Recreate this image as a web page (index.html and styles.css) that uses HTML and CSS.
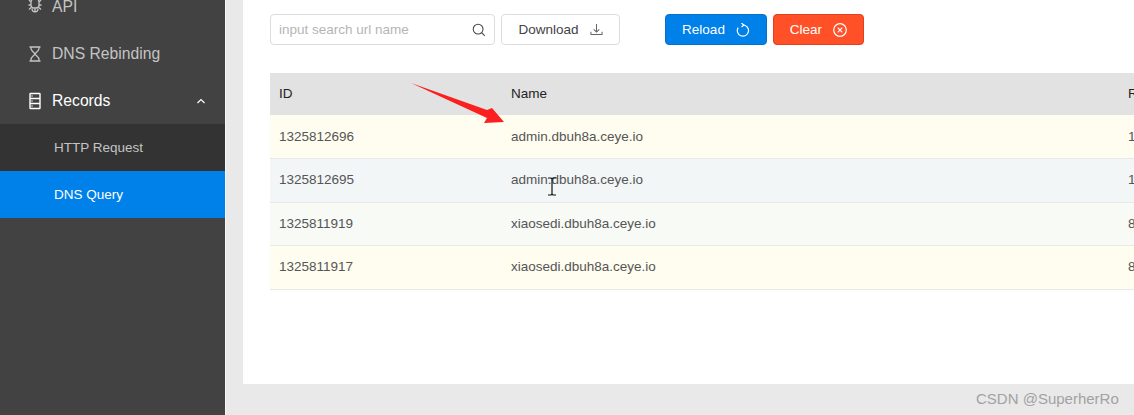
FILE: index.html
```html
<!DOCTYPE html>
<html lang="en">
<head>
    <meta charset="UTF-8">
    <title>DNS Query</title>
    <link rel="stylesheet" href="styles.css">
</head>
<body>
    <aside class="sidebar">
        <a class="menu-item">
            <svg class="menu-icon" viewBox="0 0 14 20" fill="none" stroke="currentColor" stroke-width="1.3">
                <rect x="3" y="2" width="8" height="9" rx="3"/>
                <path d="M3 8H0.5M11 8h2.5M3 10.5l-2 2M11 10.5l2 2M3 5L1 3M11 5l2-2"/>
                <path d="M4 11.5c0 4.5 6 4.5 6 0M7 11.5v3"/>
            </svg>
            <span>API</span>
        </a>
        <a class="menu-item">
            <svg class="menu-icon" viewBox="0 0 14 20" fill="none" stroke="currentColor" stroke-width="1.3">
                <path d="M1.5 3h11M1.5 17h11"/>
                <path d="M3 3v1.5c0 2.5 3 3.5 4 5.5 1-2 4-3 4-5.5V3M3 17v-1.5c0-2.5 3-3.5 4-5.5 1 2 4 3 4 5.500V17"/>
            </svg>
            <span>DNS Rebinding</span>
        </a>
        <a class="menu-item menu-open">
            <svg class="menu-icon" viewBox="0 0 14 20" fill="none" stroke="currentColor" stroke-width="1.4">
                <rect x="2" y="2.5" width="10" height="15" rx="0.5"/>
                <path d="M2 7.5h10M2 12.5h10M3.5 5h1M3.5 10h1M3.5 15h1"/>
            </svg>
            <span>Records</span>
            <svg class="menu-arrow" viewBox="0 0 10 6" fill="none" stroke="currentColor" stroke-width="1.2">
                <path d="M1.5 5L5 1.5 8.5 5"/>
            </svg>
        </a>
        <div class="submenu">
            <a class="submenu-item">HTTP Request</a>
            <a class="submenu-item active">DNS Query</a>
        </div>
    </aside>

    <main class="main">
        <div class="card">
            <div class="toolbar">
                <div class="search">
                    <span class="placeholder">input search url name</span>
                    <svg class="icon search-icon" viewBox="0 0 16 16" fill="none" stroke="currentColor" stroke-width="1.2">
                        <circle cx="7" cy="7" r="5.6"/>
                        <path d="M11 11l3.6 3.6"/>
                    </svg>
                </div>
                <button class="btn btn-default">
                    Download
                    <svg class="icon icon-download" viewBox="0 0 14 14" fill="none" stroke="currentColor" stroke-width="1.1">
                        <path d="M7 1v8.5M4 6.8l3 3 3-3M1 9.5v3h12v-3"/>
                    </svg>
                </button>
                <button class="btn btn-primary">
                    Reload
                    <svg class="icon" viewBox="0 0 14 14" fill="none" stroke="currentColor" stroke-width="1.2">
                        <path d="M7 2A5.6 5.6 0 1 1 2.2 4.6"/>
                        <path d="M5.4 0L7.8 2 5.6 4"/>
                    </svg>
                </button>
                <button class="btn btn-danger">
                    Clear
                    <svg class="icon" viewBox="0 0 14 14" fill="none" stroke="currentColor" stroke-width="1.2">
                        <circle cx="7" cy="7" r="6.3"/>
                        <path d="M4.7 4.7l4.6 4.6M9.3 4.7l-4.6 4.6"/>
                    </svg>
                </button>
            </div>

            <table class="records">
                <colgroup>
                    <col class="col-id">
                    <col class="col-name">
                    <col class="col-addr">
                </colgroup>
                <thead>
                    <tr><th>ID</th><th>Name</th><th>Remote Addr</th></tr>
                </thead>
                <tbody>
                    <tr class="row-yellow"><td>1325812696</td><td>admin.dbuh8a.ceye.io</td><td>172.253.1.3</td></tr>
                    <tr class="row-blue"><td>1325812695</td><td>admin.dbuh8a.ceye.io</td><td>172.253.1.2</td></tr>
                    <tr class="row-green"><td>1325811919</td><td>xiaosedi.dbuh8a.ceye.io</td><td>8.8.8.8</td></tr>
                    <tr class="row-yellow"><td>1325811917</td><td>xiaosedi.dbuh8a.ceye.io</td><td>8.8.4.4</td></tr>
                </tbody>
            </table>
        </div>
    </main>

    <!-- annotation drawn on top of the screenshot -->
    <svg class="annotation" viewBox="0 0 1134 415">
        <polygon points="411,83 487,110 492,108 504,122 484,123 487,118" fill="#fb1f1f"/>
        <path d="M548 178h3l1 1 1-1h3M552 179v15M548 195h3l1-1 1 1h3" fill="none" stroke="#111" stroke-width="1.2"/>
    </svg>
    <div class="watermark">CSDN @SuperherRo</div>
</body>
</html>
```

FILE: styles.css
```css
html, body {
    height: 100%;
}
body {
    display: flex;
    margin: 0;
    overflow: hidden;
    font-family: "Liberation Sans", Arial, sans-serif;
    background-color: #e9e9e9;
}
.sidebar {
    flex: 0 0 225px;
    background-color: #424242;
    overflow: hidden;
}
.menu-item {
    display: flex;
    align-items: center;
    height: 47px;
    padding: 0 19px 0 28px;
    color: #c4c4c4;
    font-size: 15.7px;
    box-sizing: border-box;
}
.menu-item:first-child {
    margin-top: -17px;
}
.menu-icon {
    width: 14px;
    height: 20px;
    margin-right: 10px;
}
.menu-open {
    color: #fff;
}
.menu-arrow {
    width: 10px;
    height: 6px;
    margin-left: auto;
}
.submenu {
    background-color: #333;
}
.submenu-item {
    display: flex;
    align-items: center;
    height: 47px;
    padding-left: 54px;
    padding-bottom: 1px;
    color: #c4c4c4;
    font-size: 13.5px;
    box-sizing: border-box;
}
.submenu-item.active {
    background-color: #0080e9;
    color: #fff;
}
.main {
    flex: 1;
    min-width: 0;
    padding: 0 0 31px 17px;
    border-left: 1px solid #f6f6f6;
    box-sizing: border-box;
}
.card {
    height: 100%;
    padding: 14px 0 0 27px;
    background-color: #fff;
    overflow: hidden;
    box-sizing: border-box;
}
.toolbar {
    display: flex;
    align-items: center;
    margin-bottom: 28px;
}
.search {
    display: flex;
    align-items: center;
    justify-content: space-between;
    width: 225px;
    height: 31px;
    padding: 0 8px;
    border: 1px solid #dcdcdc;
    border-radius: 4px;
    box-sizing: border-box;
}
.placeholder {
    color: #b5b5b5;
    font-size: 13.5px;
}
.search-icon {
    color: #444;
}
.icon {
    width: 14px;
    height: 14px;
}
.icon-download {
    width: 13px;
    height: 13px;
    color: #666;
}
.btn {
    display: flex;
    align-items: center;
    justify-content: center;
    gap: 11px;
    height: 31px;
    padding: 0;
    border: 1px solid transparent;
    border-radius: 4px;
    font-family: inherit;
    font-size: 13.5px;
    box-sizing: border-box;
}
.btn-default {
    width: 119px;
    margin-left: 6px;
    border-color: #dcdcdc;
    background-color: #fff;
    color: #444;
}
.btn-primary {
    width: 102px;
    margin-left: 45px;
    border-color: #0a6fc9;
    background-color: #0080e9;
    color: #fff;
}
.btn-danger {
    width: 91px;
    margin-left: 6px;
    border-color: #e0401c;
    background-color: #ff5027;
    color: #fff;
}
.records {
    width: 1000px;
    border-collapse: collapse;
    table-layout: fixed;
    font-size: 13.5px;
}
.col-id {
    width: 232px;
}
.col-name {
    width: 617px;
}
.records th {
    height: 42px;
    padding: 0 0 2px 9px;
    background-color: #e2e2e2;
    color: #222;
    font-weight: normal;
    text-align: left;
    box-sizing: border-box;
}
.records td {
    height: 43.5px;
    padding: 0 0 1px 9px;
    border-bottom: 1px solid #e8e8e8;
    color: #555;
    box-sizing: border-box;
}
.row-yellow {
    background-color: #fffdf0;
}
.row-blue {
    background-color: #f2f6f7;
}
.row-green {
    background-color: #f7faf5;
}
.annotation {
    position: absolute;
    top: 0;
    left: 0;
    width: 1134px;
    height: 415px;
    pointer-events: none;
}
.watermark {
    position: absolute;
    top: 390px;
    left: 976px;
    color: #a2a2a2;
    font-size: 15px;
}
```
